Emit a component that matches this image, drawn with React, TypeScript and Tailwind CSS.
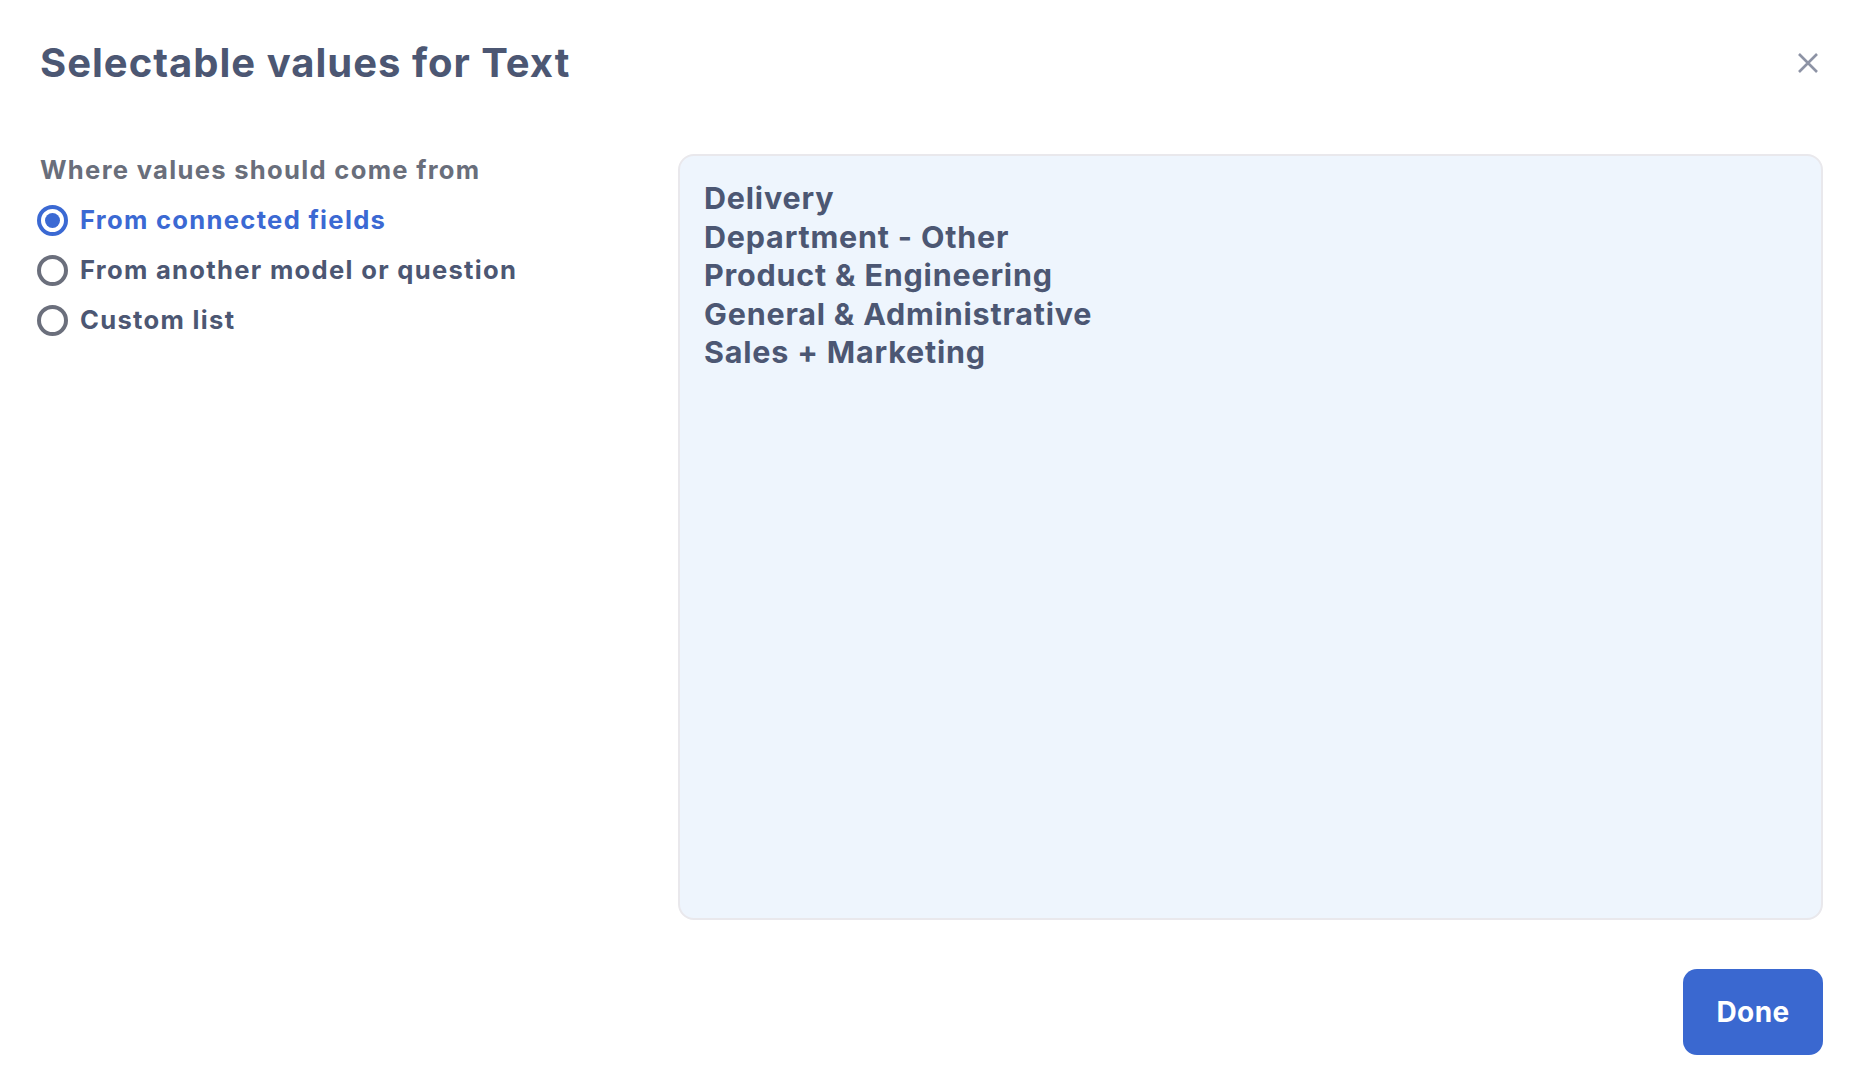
const font = { fontFamily: "Inter, 'Noto Sans', sans-serif" };

const values = [
  "Delivery",
  "Department - Other",
  "Product & Engineering",
  "General & Administrative",
  "Sales + Marketing",
];

function Radio({ label, checked = false }: { label: string; checked?: boolean }) {
  return (
    <label className="flex h-[32px] items-center gap-[12px] -ml-[3px] cursor-pointer">
      <span
        className={`flex h-[31px] w-[31px] shrink-0 items-center justify-center rounded-full border-[4px] ${
          checked ? "border-[#3b69d3]" : "border-[#6b6f7c]"
        }`}
      >
        {checked && <span className="h-[15px] w-[15px] rounded-full bg-[#3b69d3]" />}
      </span>
      <span
        className={`text-[25.6px] leading-[32px] font-bold tracking-[1.3px] ${
          checked ? "text-[#3b69d3]" : "text-[#4c5773]"
        }`}
      >
        {label}
      </span>
    </label>
  );
}

export default function App() {
  return (
    <div className="min-h-screen bg-white" style={font}>
      <div className="flex h-[1086px] flex-col pl-[40px] pr-[35px] pt-[39px] pb-[31px]">
        {/* header */}
        <div className="flex items-start justify-between">
          <h1 className="text-[40px] leading-[48px] font-bold tracking-[1px] text-[#4c5773]">
            Selectable values for Text
          </h1>
          <button className="mt-[14px] mr-[5px] text-[#8d93a5]" aria-label="Close">
            <svg width="20" height="20" viewBox="0 0 20 20" fill="none" stroke="currentColor" strokeWidth="2.6">
              <path d="M1 1 L19 19 M19 1 L1 19" />
            </svg>
          </button>
        </div>

        {/* body */}
        <div className="mt-[67px] flex flex-1 min-h-0">
          <div className="w-[638px] shrink-0">
            <div className="text-[25.6px] leading-[32px] font-bold tracking-[1.3px] text-[#696e7b]">
              Where values should come from
            </div>
            <div className="mt-[18px] flex flex-col gap-[18px]">
              <Radio label="From connected fields" checked />
              <Radio label="From another model or question" />
              <Radio label="Custom list" />
            </div>
          </div>

          <div className="flex-1 rounded-[16px] border-2 border-[#e9e8ec] bg-[#eef5fd] px-[24px] pt-[23px]">
            {values.map((v) => (
              <div
                key={v}
                className="text-[30.5px] leading-[38.6px] font-bold tracking-[0.8px] text-[#4c5773]"
              >
                {v}
              </div>
            ))}
          </div>
        </div>

        {/* footer */}
        <div className="mt-[49px] flex justify-end">
          <button className="h-[86px] w-[140px] rounded-[14px] bg-[#3a68d0] text-[28px] font-bold tracking-[0.4px] text-white">
            Done
          </button>
        </div>
      </div>
    </div>
  );
}
